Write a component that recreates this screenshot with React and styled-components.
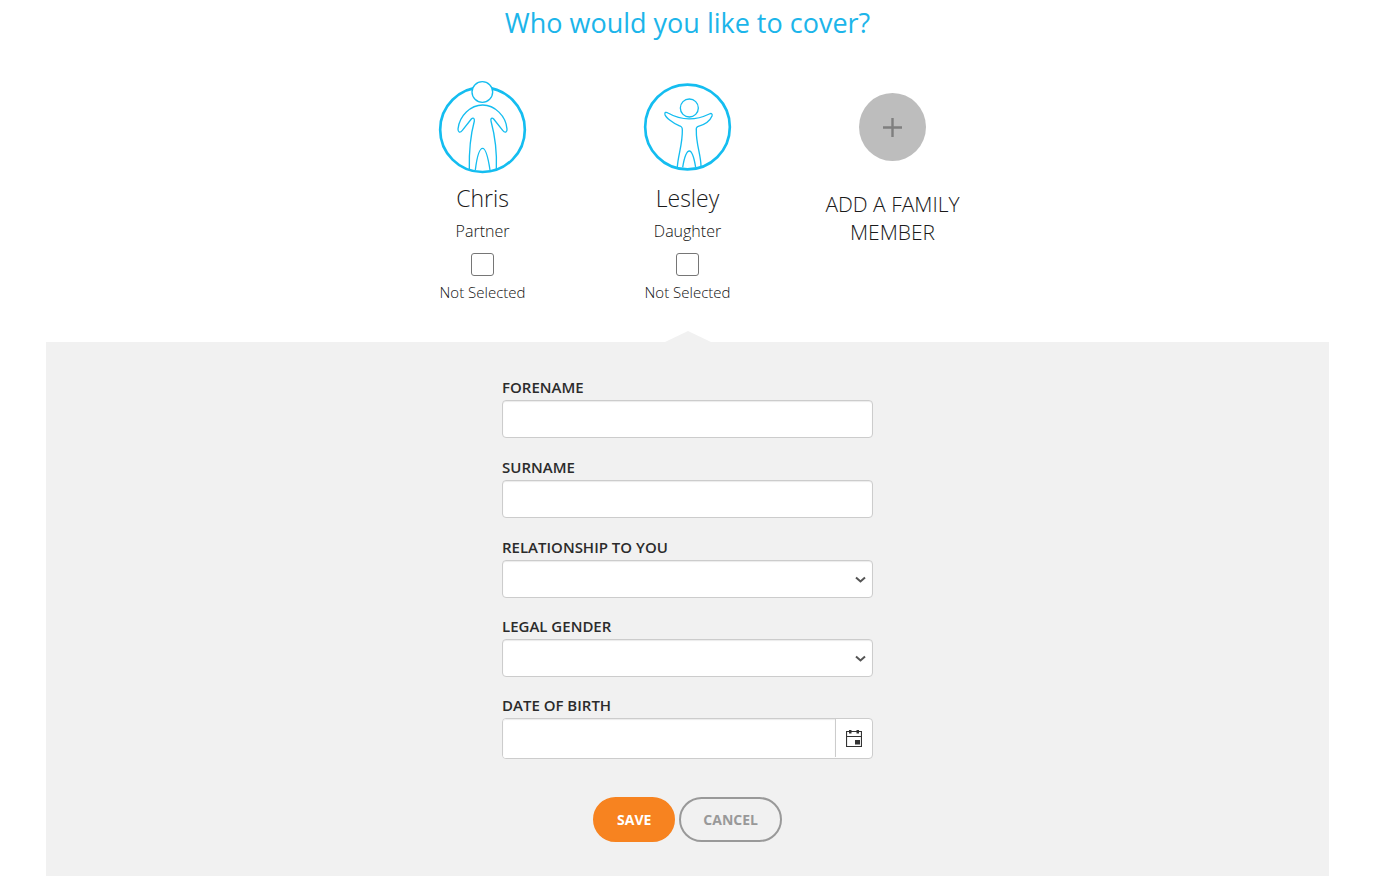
import React from "react";
import styled, { createGlobalStyle } from "styled-components";

const GlobalStyle = createGlobalStyle`
  *, *::before, *::after { box-sizing: border-box; }
  body {
    margin: 0;
    background: #fff;
    color: #2b2b2b;
    font-family: "Open Sans", "Liberation Sans", sans-serif;
    font-size: 16px;
  }
`;

const Page = styled.main`
  padding: 0 58px 12px 46px;
`;

const Title = styled.h1`
  margin: 0;
  padding-top: 4px;
  font-size: 27px;
  line-height: 38px;
  font-weight: 400;
  text-align: center;
  color: #1cb5ea;
`;

const People = styled.section`
  display: grid;
  grid-template-columns: repeat(3, 205px);
  justify-content: center;
  padding: 28px 0 40px;
`;

const Person = styled.article`
  display: flex;
  flex-direction: column;
  align-items: center;
`;

const Avatar = styled.svg`
  width: 105px;
  height: 110px;
  fill: none;
  stroke: #14bdf0;
  stroke-width: 4;
  stroke-linejoin: round;
`;

const Name = styled.h2`
  margin: 0;
  font-size: 23px;
  line-height: 36px;
  font-weight: 300;
  color: #1a1a1a;
`;

const Relation = styled.p`
  margin: 0;
  padding-top: 3px;
  font-size: 16px;
  line-height: 24px;
  font-weight: 300;
  color: #111;
`;

const Choice = styled.label`
  display: flex;
  flex-direction: column;
  align-items: center;
  gap: 6px;
  padding-top: 10px;
  font-size: 15px;
  line-height: 20px;
  font-weight: 300;
  color: #111;
`;

const Tick = styled.input`
  appearance: none;
  width: 23px;
  height: 23px;
  margin: 0;
  border: 1px solid #767676;
  border-radius: 3px;
  background: #fff;
  &:checked { background: #1cb5ea; }
`;

const AddButton = styled.button`
  display: flex;
  flex-direction: column;
  align-items: center;
  align-self: start;
  gap: 29px;
  padding: 23px 32px 0;
  border: 0;
  background: none;
  color: #1a1a1a;
  font-family: inherit;
  font-size: 21px;
  line-height: 28px;
  font-weight: 300;
  text-transform: uppercase;
  cursor: pointer;
`;

const PlusDisc = styled.svg`
  width: 67px;
  height: 68px;
`;

const Panel = styled.section`
  position: relative;
  padding: 32px 20px 34px;
  background: #f1f1f1;
  &::before {
    content: "";
    position: absolute;
    bottom: 100%;
    left: 50%;
    transform: translateX(-50%);
    border: solid transparent;
    border-width: 0 23px 11px;
    border-bottom-color: #f1f1f1;
  }
`;

const Form = styled.form`
  width: 100%;
  max-width: 371px;
  margin: 0 auto;
`;

const Field = styled.div`
  position: relative;
  margin-bottom: ${(p) => (p.$tight ? 15 : 16)}px;
`;

const Label = styled.label`
  display: block;
  height: 26px;
  font-size: 15px;
  line-height: 26px;
  font-weight: 600;
  text-transform: uppercase;
`;

const TextBox = styled.input`
  display: block;
  width: 100%;
  height: 38px;
  padding: 6px 12px;
  border: 1px solid #ccc;
  border-radius: 4px;
  background: #fff;
  box-shadow: inset 0 1px 1px rgba(0, 0, 0, 0.08);
  font: inherit;
  color: inherit;
`;

const DropDown = styled(TextBox).attrs({ as: "select" })`
  appearance: none;
`;

const Chevron = styled.svg`
  position: absolute;
  right: 7px;
  bottom: 14px;
  width: 11px;
  height: 9px;
  pointer-events: none;
`;

const DateGroup = styled.div`
  display: flex;
  height: 41px;
  border: 1px solid #ccc;
  border-radius: 4px;
  background: #fff;
`;

const DateBox = styled.input`
  flex: 1;
  min-width: 0;
  padding: 6px 12px;
  border: 0;
  border-radius: 3px 0 0 3px;
  background: #fff;
  box-shadow: inset 0 1px 1px rgba(0, 0, 0, 0.08);
  font: inherit;
  color: inherit;
`;

const CalendarButton = styled.button`
  display: flex;
  align-items: center;
  justify-content: center;
  width: 37px;
  height: 38px;
  padding: 0;
  border: 0;
  border-left: 1px solid #ccc;
  background: none;
  cursor: pointer;
`;

const Actions = styled.div`
  display: flex;
  justify-content: center;
  gap: 4px;
  padding-top: 22px;
`;

const Pill = styled.button`
  height: 45px;
  padding: 0 22px;
  border: 2px solid ${(p) => (p.$primary ? "#f78320" : "#999")};
  border-radius: 23px;
  background: ${(p) => (p.$primary ? "#f78320" : "transparent")};
  color: ${(p) => (p.$primary ? "#fff" : "#999")};
  font-family: inherit;
  font-size: 14px;
  line-height: 20px;
  font-weight: 700;
  text-transform: uppercase;
  cursor: pointer;
`;

function AdultFigure() {
  return (
    <Avatar viewBox="0 0 315 330" aria-hidden="true">
      <circle cx="157.5" cy="179" r="127" strokeWidth="8" />
      <circle cx="157" cy="66" r="31" fill="#fff" />
      <path d="M118 297 C117 248 122 194 133 153 C134 144 129 142 124 147 L97 181 C90 190 84 187 84 177 C88 137 122 105 158 105 C194 105 228 138 231 177 C232 187 225 190 218 181 L191 147 C186 142 181 145 183 153 C194 194 201 248 199 297" />
      <path d="M136 300 C140 267 147 235 158 235 C169 235 175 267 180 300" />
    </Avatar>
  );
}

function ChildFigure() {
  return (
    <Avatar viewBox="0 0 315 330" aria-hidden="true">
      <circle cx="157.5" cy="171" r="127" strokeWidth="8" />
      <circle cx="163" cy="114" r="27" />
      <path d="M127 291 C129 256 143 222 142 180 C142 170 139 170 132 167 C113 159 93 143 90 134 C88 127 93 125 99 129 C141 153 181 152 223 132 C229 129 233 131 231 138 C225 153 206 165 188 170 C183 172 183 175 184 182 C183 222 198 256 198 289" />
      <path d="M143 292 C147 268 153 243 163 243 C173 243 178 268 182 292" />
    </Avatar>
  );
}

function PersonCard({ id, name, relation, children }) {
  return (
    <Person>
      {children}
      <Name>{name}</Name>
      <Relation>{relation}</Relation>
      <Choice htmlFor={id}>
        <Tick id={id} type="checkbox" />
        Not Selected
      </Choice>
    </Person>
  );
}

function TextField({ id, label }) {
  return (
    <Field>
      <Label htmlFor={id}>{label}</Label>
      <TextBox id={id} type="text" />
    </Field>
  );
}

function SelectField({ id, label, options }) {
  return (
    <Field $tight>
      <Label htmlFor={id}>{label}</Label>
      <DropDown id={id} defaultValue="">
        <option value="" />
        {options.map((o) => (
          <option key={o}>{o}</option>
        ))}
      </DropDown>
      <Chevron viewBox="0 0 11 9" aria-hidden="true">
        <path d="M1 2.5 5.5 6.5 10 2.5" fill="none" stroke="#555" strokeWidth="2" />
      </Chevron>
    </Field>
  );
}

export default function App() {
  return (
    <>
      <GlobalStyle />
      <Page>
        <Title>Who would you like to cover?</Title>
        <People>
          <PersonCard id="cover-chris" name="Chris" relation="Partner">
            <AdultFigure />
          </PersonCard>
          <PersonCard id="cover-lesley" name="Lesley" relation="Daughter">
            <ChildFigure />
          </PersonCard>
          <AddButton type="button">
            <PlusDisc viewBox="0 0 67 68" aria-hidden="true">
              <ellipse cx="33.5" cy="34" rx="33.5" ry="34" fill="#bdbdbd" />
              <path d="M24 34.5H43M33.5 25V44" stroke="#7f7f7f" strokeWidth="2.4" />
            </PlusDisc>
            <span>Add a family member</span>
          </AddButton>
        </People>
        <Panel>
          <Form onSubmit={(e) => e.preventDefault()}>
            <TextField id="forename" label="Forename" />
            <TextField id="surname" label="Surname" />
            <SelectField id="relationship" label="Relationship to you" options={[]} />
            <SelectField id="gender" label="Legal gender" options={[]} />
            <Field>
              <Label htmlFor="dob">Date of birth</Label>
              <DateGroup>
                <DateBox id="dob" type="text" />
                <CalendarButton type="button" aria-label="Choose a date">
                  <svg width="16" height="18" viewBox="0 0 16 18" aria-hidden="true">
                    <path d="M.5 2.5H15.5V17.5H.5ZM.5 7.5H15.5" fill="none" stroke="#333" strokeWidth="1.2" />
                    <path d="M3 1H5.5V4.5H3ZM10.5 1H13V4.5H10.5ZM9 11H14V15.5H9Z" fill="#333" />
                  </svg>
                </CalendarButton>
              </DateGroup>
            </Field>
            <Actions>
              <Pill type="submit" $primary>Save</Pill>
              <Pill type="button">Cancel</Pill>
            </Actions>
          </Form>
        </Panel>
      </Page>
    </>
  );
}
